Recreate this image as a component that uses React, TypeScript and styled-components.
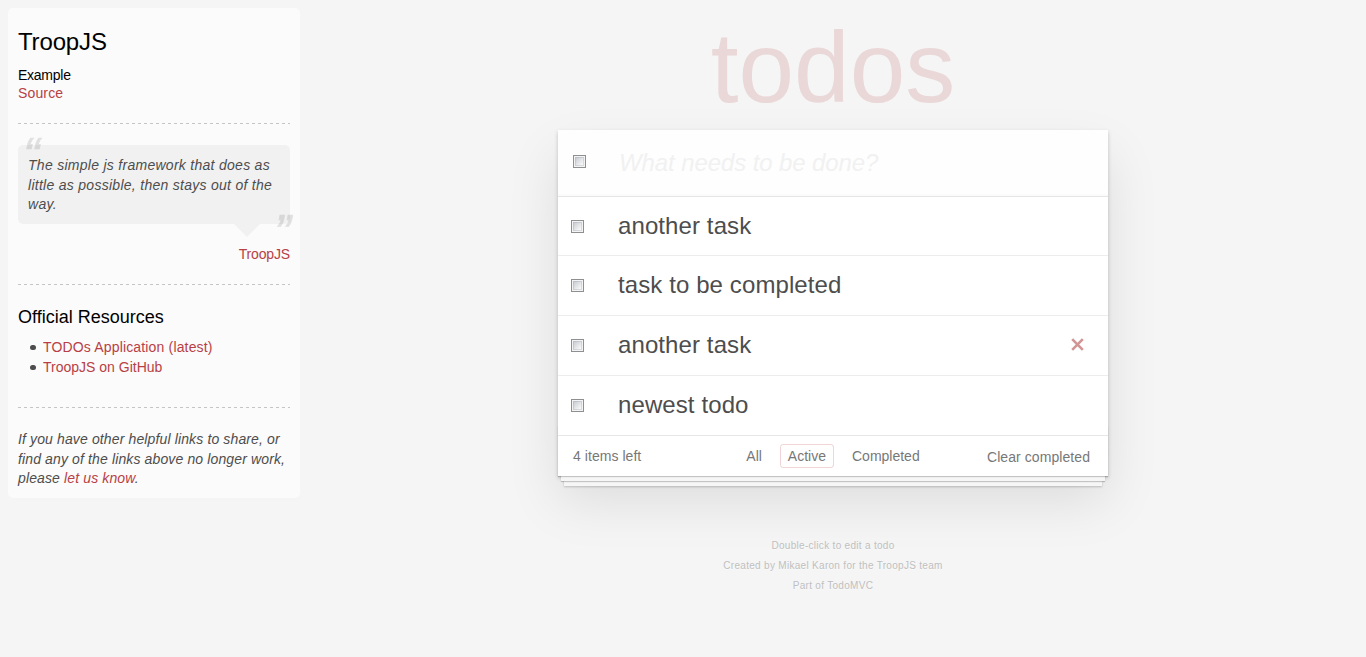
import React from "react";
import styled, { createGlobalStyle, css } from "styled-components";

const GlobalStyle = createGlobalStyle`
  body {
    margin: 0;
    background: #f5f5f5;
    color: #4d4d4d;
    font: 14px/19.6px "Liberation Sans", Arial, sans-serif;
  }
  ul, p, h1, h3, h4, h5, blockquote { margin: 0; padding: 0; font-weight: 400; }
  ul { list-style: none; }
`;

const Page = styled.div`
  display: flex;
  align-items: flex-start;
  height: 657px;
  overflow: hidden;
`;

const Learn = styled.aside`
  box-sizing: border-box;
  flex: none;
  width: 292px;
  height: 490px;
  margin: 8px 0 0 8px;
  padding: 19px 10px 0;
  border-radius: 5px;
  background: rgba(255, 255, 255, 0.6);
`;

const Title = styled.h3`
  color: #000;
  font-size: 24px;
  line-height: 29px;
  margin-bottom: 11px;
  letter-spacing: -0.15px;
`;

const Subtitle = styled.h5`
  color: #000;
  font-size: 14px;
  line-height: 17px;
  letter-spacing: -0.25px;
`;

const SourceLine = styled.div`
  height: 19px;
  letter-spacing: 0.15px;
`;

const SectionTitle = styled.h4`
  color: #000;
  font-size: 18px;
  line-height: 22px;
  margin-bottom: 9px;
`;

const Link = styled.a`
  color: #b83f45;
  text-decoration: none;
  font-weight: 400;
`;

const Rule = styled.hr`
  border: 0;
  height: 1px;
  background: repeating-linear-gradient(to right, #c5c5c5 0 3px, transparent 3px 6px);
  margin: 20px 0 21px;
`;

const Quote = styled.blockquote`
  position: relative;
  padding: 11px 10px 10px;
  height: 58px;
  border-radius: 5px;
  background: rgba(0, 0, 0, 0.04);
  font-style: italic;
  letter-spacing: 0.28px;

  &::after {
    content: "";
    position: absolute;
    top: 79px;
    right: 30px;
    border: 13px solid transparent;
    border-top-color: rgba(0, 0, 0, 0.04);
    border-bottom: 0;
  }
`;

const QuoteMark = styled.span<{ $close?: boolean }>`
  position: absolute;
  color: #000;
  opacity: 0.1;
  font-size: 50px;
  line-height: 50px;
  letter-spacing: 0;
  -webkit-text-stroke: 0.7px #000;
  ${(p) =>
    p.$close
      ? css`
          right: -1px;
          bottom: -34px;
        `
      : css`
          top: -14px;
          left: 5px;
        `}
`;

const Author = styled.div`
  height: 19px;
  margin-top: 21px;
  text-align: right;
  letter-spacing: -0.15px;
`;

const Resources = styled.ul`
  padding-left: 25px;
  height: 50px;
  line-height: 20px;

  li { position: relative; }
  li::before {
    content: "";
    position: absolute;
    top: 7.5px;
    left: -13px;
    width: 5.5px;
    height: 5.5px;
    border-radius: 50%;
    background: #4d4d4d;
  }
  li:first-child { letter-spacing: 0.16px; }
`;

const Note = styled.p`
  margin-top: 22px;
  font-style: italic;
  letter-spacing: 0.13px;
`;

const Main = styled.main`
  flex: 1;
  display: flex;
  flex-direction: column;
  align-items: center;
`;

const Heading = styled.h1`
  height: 130px;
  box-sizing: border-box;
  padding-top: 10px;
  color: rgba(175, 47, 47, 0.15);
  font-size: 100px;
  line-height: 115px;
`;

const Card = styled.section`
  width: 550px;
  height: 346px;
  background: #fff;
  box-shadow: 0 2px 4px 0 rgba(0, 0, 0, 0.2), 0 25px 50px 0 rgba(0, 0, 0, 0.1);
`;

const NewTodo = styled.div`
  box-sizing: border-box;
  display: flex;
  align-items: center;
  height: 66px;
  padding: 0 14.5px;
  background: rgba(0, 0, 0, 0.003);
  box-shadow: inset 0 -2px 1px rgba(0, 0, 0, 0.015);
`;

const Prompt = styled.span`
  margin-left: 33.5px;
  color: #f1f1f1;
  font-size: 24px;
  font-style: italic;
  line-height: 30px;
  letter-spacing: -0.1px;
`;

const CheckBox = styled.span.attrs({ role: "checkbox", "aria-checked": false })<{ $raised?: boolean }>`
  box-sizing: border-box;
  flex: none;
  width: 13px;
  height: 13px;
  margin-bottom: ${(p) => (p.$raised ? "3px" : "0")};
  border: 1px solid #8e8f8f;
  background: linear-gradient(135deg, #cbcfd5 20%, #f6f6f6 75%) padding-box;
  box-shadow: inset 0 0 0 1px #f4f4f4, inset 0 0 0 2px rgba(160, 165, 180, 0.35);
`;

const List = styled.ul`
  border-top: 1px solid #e6e6e6;
`;

const Item = styled.li`
  box-sizing: border-box;
  display: flex;
  align-items: center;
  height: 60px;
  padding: 0 24px 0 13px;
  border-bottom: 1px solid #ededed;
  font-size: 24px;
  letter-spacing: 0.1px;

  &:first-child { height: 59px; }
  &:last-child { height: 59px; border-bottom: 0; }
`;

const Label = styled.label`
  flex: 1;
  margin-left: 34px;
  padding-bottom: 2px;
  line-height: 29px;
`;

const Remove = styled.svg`
  width: 13px;
  height: 13px;
  margin-bottom: 2px;
  fill: none;
  stroke: #d29595;
  stroke-width: 2.6;
`;

const Footer = styled.footer`
  position: relative;
  box-sizing: border-box;
  display: flex;
  justify-content: space-between;
  height: 41px;
  padding: 10px 18px 10px 15px;
  border-top: 1px solid #e6e6e6;
  color: #777;
  line-height: 20px;

  &::before {
    content: "";
    position: absolute;
    right: 0;
    bottom: 0;
    left: 0;
    height: 50px;
    pointer-events: none;
    box-shadow: 0 1px 1px rgba(0, 0, 0, 0.2), 0 8px 0 -3px #f6f6f6,
      0 9px 1px -3px rgba(0, 0, 0, 0.2), 0 16px 0 -6px #f6f6f6,
      0 17px 2px -6px rgba(0, 0, 0, 0.2);
  }
`;

const Count = styled.span`
  width: 165.3px;
  letter-spacing: 0.05px;
`;

const Filters = styled.ul`
  display: flex;
  gap: 10px;
  margin-top: -2px;
  flex: 1;
`;

const Filter = styled.li<{ $selected?: boolean }>`
  box-sizing: border-box;
  height: 24px;
  padding: 1px 7px;
  border: 1px solid ${(p) => (p.$selected ? "rgba(175, 47, 47, 0.2)" : "transparent")};
  border-radius: 3px;
`;

const Clear = styled.span`
  margin-top: 1px;
  letter-spacing: 0.07px;
`;

const Info = styled.div`
  margin-top: 60px;
  color: #bfbfbf;
  font-size: 10px;
  line-height: 20px;
  text-align: center;
  letter-spacing: 0.3px;
  text-shadow: 0 1px 0 rgba(255, 255, 255, 0.5);
`;

const todos = [
  { id: 1, text: "another task" },
  { id: 2, text: "task to be completed" },
  { id: 3, text: "another task", hovered: true },
  { id: 4, text: "newest todo" },
];

export default function App() {
  return (
    <Page>
      <GlobalStyle />
      <Learn>
        <Title>TroopJS</Title>
        <Subtitle>Example</Subtitle>
        <SourceLine><Link>Source</Link></SourceLine>
        <Rule />
        <Quote>
          <QuoteMark>“</QuoteMark>
          <p>The simple js framework that does as little as possible, then stays out of the way.</p>
          <QuoteMark $close>”</QuoteMark>
        </Quote>
        <Author><Link>TroopJS</Link></Author>
        <Rule />
        <SectionTitle>Official Resources</SectionTitle>
        <Resources>
          <li><Link>TODOs Application (latest)</Link></li>
          <li><Link>TroopJS on GitHub</Link></li>
        </Resources>
        <Rule />
        <Note>
          If you have other helpful links to share, or find any of the links above no longer work,
          please <Link>let us know</Link>.
        </Note>
      </Learn>
      <Main>
        <Heading>todos</Heading>
        <Card>
          <NewTodo>
            <CheckBox $raised />
            <Prompt>What needs to be done?</Prompt>
          </NewTodo>
          <List>
            {todos.map((todo) => (
              <Item key={todo.id}>
                <CheckBox />
                <Label>{todo.text}</Label>
                {todo.hovered && (
                  <Remove viewBox="0 0 13 13">
                    <path d="M1.2 1.2 11.8 11.8M11.8 1.2 1.2 11.8" />
                  </Remove>
                )}
              </Item>
            ))}
          </List>
          <Footer>
            <Count>4 items left</Count>
            <Filters>
              <Filter>All</Filter>
              <Filter $selected>Active</Filter>
              <Filter>Completed</Filter>
            </Filters>
            <Clear>Clear completed</Clear>
          </Footer>
        </Card>
        <Info>
          <p>Double-click to edit a todo</p>
          <p>Created by Mikael Karon for the TroopJS team</p>
          <p>Part of TodoMVC</p>
        </Info>
      </Main>
    </Page>
  );
}
